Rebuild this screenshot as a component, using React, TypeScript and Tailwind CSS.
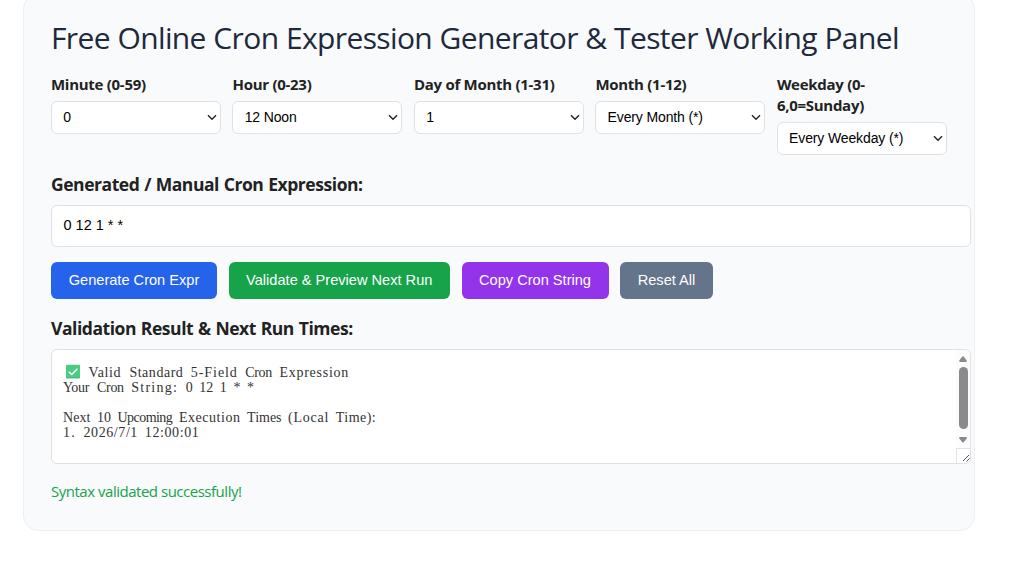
import type { ReactNode } from "react";

const fields = [
  { label: "Minute (0-59)", value: "0" },
  { label: "Hour (0-23)", value: "12 Noon" },
  { label: "Day of Month (1-31)", value: "1" },
  { label: "Month (1-12)", value: "Every Month (*)" },
  { label: "Weekday (0-6,0=Sunday)", value: "Every Weekday (*)" },
];

const ui = "font-['Open_Sans','Noto_Sans',sans-serif]";

// Column width of the result text, and the font size it is set in.
const COLUMN = 6.82;
const SIZE = 14;

// Approximate advance of a serif glyph, in em.
function advance(ch: string) {
  if ("ijlt:./".includes(ch)) return 0.28;
  if ("frsI()-".includes(ch)) return 0.34;
  if ("eacz".includes(ch)) return 0.44;
  if ("STEFL".includes(ch)) return 0.6;
  if ("VYNUC".includes(ch)) return 0.71;
  if (ch === "m") return 0.78;
  return 0.5;
}

function ResultLine({ text }: { text: string }) {
  return (
    <div className="flex h-[15px] items-center">
      {text.split(" ").map((word, i) => {
        const natural = [...word].reduce((sum, ch) => sum + advance(ch) * SIZE, 0);
        const spacing = (word.length * COLUMN - natural) / word.length;
        return (
          <span
            key={i}
            className="inline-block"
            style={{
              width: (word.length + 1) * COLUMN,
              letterSpacing: word.length > 1 ? Math.min(spacing, 1.3) : 0,
            }}
          >
            {word + " "}
          </span>
        );
      })}
    </div>
  );
}

function Field({ label, value }: { label: string; value: string }) {
  return (
    <div className="flex w-[170px] shrink-0 flex-col">
      <label className="text-[15px] leading-[20.6px] font-bold tracking-[-0.28px]">{label}</label>
      <button className="mt-[6.4px] flex h-[33px] items-center justify-between rounded-[6px] border border-[#dfe1e4] bg-white pr-[3px] pl-[11.2px] font-['Liberation_Sans',sans-serif] text-[14px] tracking-[-0.13px] text-black">
        <span>{value}</span>
        <svg width="10" height="7" viewBox="0 0 10 7" fill="none" stroke="#222" strokeWidth="1.4">
          <path d="M1 1.2 5 5.2 9 1.2" />
        </svg>
      </button>
    </div>
  );
}

function SectionTitle({ children }: { children: ReactNode }) {
  return (
    <h3 className="h-6 text-[17.5px] leading-6 font-bold tracking-[-0.45px] whitespace-nowrap [word-spacing:0.7px]">
      {children}
    </h3>
  );
}

export default function App() {
  return (
    <div className={`h-[585px] overflow-hidden bg-white pl-[23px] text-[#222] ${ui}`}>
      <main className="-mt-[6px] h-[537px] w-[952px] rounded-[15px] border border-[#edf0f3] bg-[#f8fafc] pl-[27px]">
        <h1 className="mt-[20px] h-[46px] text-[30px] leading-[46px] font-[380] tracking-[-0.62px] whitespace-nowrap text-[#1e293b] [word-spacing:0.3px]">
          Free Online Cron Expression Generator &amp; Tester Working Panel
        </h1>
        <div className="mt-[13px] flex h-[81px] items-start gap-[11.48px]">
          {fields.map((f) => (
            <Field key={f.label} {...f} />
          ))}
        </div>
        <div className="mt-[17px]">
          <SectionTitle>Generated / Manual Cron Expression:</SectionTitle>
        </div>
        <div className="mt-[9px] flex h-[42px] w-[920px] items-center rounded-[6px] border border-[#dfe1e4] bg-white pl-[11.5px] font-['Liberation_Sans',sans-serif] text-[14.5px] text-black">
          0 12 1 * *
        </div>
        <div className="mt-[15px] flex h-[37px] gap-[11.5px] font-['Liberation_Sans',sans-serif] text-[14.6px] whitespace-nowrap text-white">
          <button className="w-[166px] rounded-[6px] bg-[#2563eb]">Generate Cron Expr</button>
          <button className="w-[221.5px] rounded-[6px] bg-[#16a34a]">Validate &amp; Preview Next Run</button>
          <button className="w-[147px] rounded-[6px] bg-[#9333ea]">Copy Cron String</button>
          <button className="w-[93px] rounded-[6px] bg-[#64748b]">Reset All</button>
        </div>
        <div className="mt-[17px]">
          <SectionTitle>Validation Result &amp; Next Run Times:</SectionTitle>
        </div>
        <div className="mt-[9px] flex h-[115px] w-[920px] justify-between overflow-hidden rounded-[6px] border border-[#dfe1e4] bg-white">
          <div className="pt-[15px] pl-[11px] font-['Liberation_Serif',serif] text-[14px] leading-[15px] whitespace-pre text-[#333]">
            <div className="flex h-[15px] items-center">
              <svg className="mr-[8.5px] ml-[3px] shrink-0 -translate-y-[1.5px]" width="14" height="14" viewBox="0 0 14 14">
                <rect width="14" height="14" rx="1" fill="#4ccb83" />
                <path d="M0 13h14v1H0z" fill="#3fae70" />
                <path d="m2.7 7.2 3 2.9 5.7-5.8" fill="none" stroke="#fff" strokeWidth="1.4" />
              </svg>
              <ResultLine text="Valid Standard 5-Field Cron Expression" />
            </div>
            <ResultLine text="Your Cron String: 0 12 1 * *" />
            <div className="h-[15px]" />
            <ResultLine text="Next 10 Upcoming Execution Times (Local Time):" />
            <ResultLine text="1. 2026/7/1 12:00:01" />
          </div>
          <div className="flex w-[14px] flex-col items-center bg-[#fcfcfc]">
            <svg className="mt-[6px]" width="8" height="6" viewBox="0 0 8 6">
              <path d="M3.3.6Q4 0 4.7.6L7.7 4.6Q8 6 7 6H1Q0 6 .3 4.6Z" fill="#8a8a8a" />
            </svg>
            <div className="mt-[5.5px] h-[62px] w-[9px] rounded-full bg-[#8a8a8a]" />
            <svg className="mt-[8px]" width="8" height="6" viewBox="0 0 8 6">
              <path d="M3.3 5.4Q4 6 4.7 5.4L7.7 1.4Q8 0 7 0H1Q0 0 .3 1.4Z" fill="#8a8a8a" />
            </svg>
            <div className="mt-[5px] flex h-[15px] w-[14px] items-end justify-end border-t border-l border-[#e3e3e3] bg-white pb-[1px]">
              <svg width="8" height="8" viewBox="0 0 8 8" stroke="#555" strokeWidth="1" fill="none">
                <path d="m1 7 6-6M4.5 7.5 7.5 4.5" />
              </svg>
            </div>
          </div>
        </div>
        <p className="mt-[16px] h-[22px] text-[15px] leading-[22px] tracking-[-0.48px] text-[#16a34a]">
          Syntax validated successfully!
        </p>
      </main>
    </div>
  );
}
